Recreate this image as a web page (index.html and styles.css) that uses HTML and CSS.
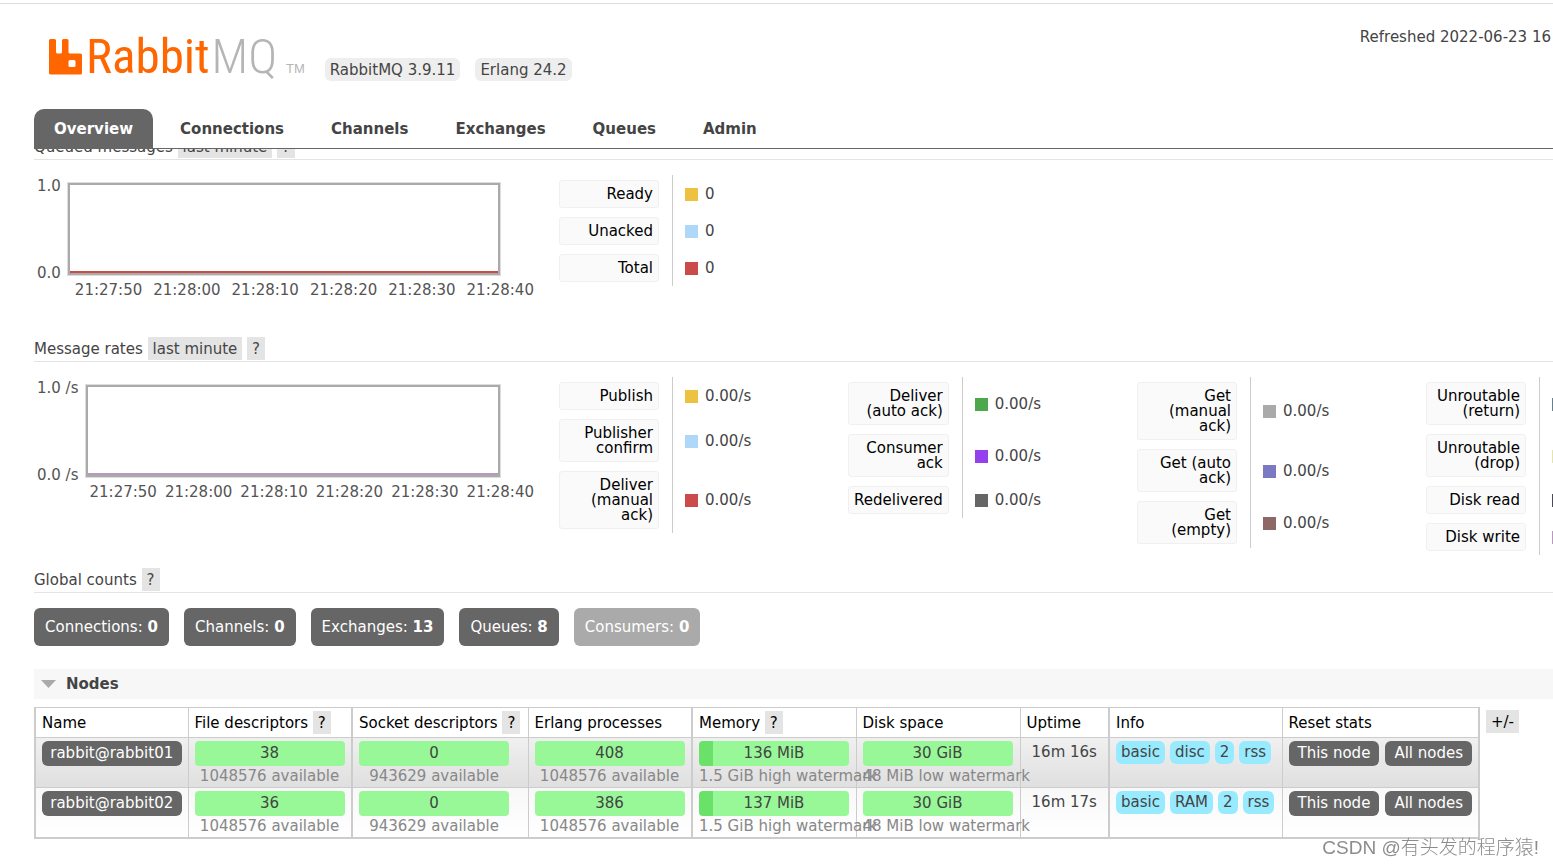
FILE: index.html
```html
<!DOCTYPE html>
<html lang="en">
<head>
<meta charset="utf-8">
<title>RabbitMQ Management</title>
<link rel="stylesheet" href="styles.css">
</head>
<body>
<header class="header">
  <div class="brand-row">
    <a class="logo" href="#">
      <svg class="logo-mark" viewBox="0 0 33 36" aria-hidden="true"><path fill="#f60" fill-rule="evenodd" d="M1.500 0H5.500Q7 0 7 1.500V13Q7 14.500 8.500 14.500H11.500Q13 14.500 13 13V1.500Q13 0 14.500 0H18Q19.500 0 19.500 1.500V13Q19.500 14.500 21 14.500H31.500Q33 14.500 33 16V34Q33 35.500 31.500 35.500H1.500Q0 35.500 0 34V1.500Q0 0 1.500 0ZM21 21Q19.500 21 19.500 22.500V26.500Q19.500 28 21 28H25Q26.500 28 26.500 26.500V22.500Q26.500 21 25 21Z"/></svg>
      <span class="logo-text">Rabbit<span class="logo-mq">MQ</span></span><span class="logo-tm">TM</span>
    </a>
    <span class="version">RabbitMQ 3.9.11</span>
    <span class="version">Erlang 24.2</span>
    <span class="refreshed">Refreshed 2022-06-23 16</span>
  </div>
  <nav class="tabs">
    <a class="tab selected" href="#">Overview</a>
    <a class="tab" href="#">Connections</a>
    <a class="tab" href="#">Channels</a>
    <a class="tab" href="#">Exchanges</a>
    <a class="tab" href="#">Queues</a>
    <a class="tab" href="#">Admin</a>
  </nav>
</header>

<main class="main">
  <section class="stats stats-queued">
    <h3 class="heading">Queued messages <button class="chip">last minute</button> <button class="chip">?</button></h3>
    <div class="stats-body">
      <div class="chart">
        <div class="y-axis"><span>1.0</span><span>0.0</span></div>
        <div class="plot plot-total"></div>
        <div class="x-axis"><span>21:27:50</span><span>21:28:00</span><span>21:28:10</span><span>21:28:20</span><span>21:28:30</span><span>21:28:40</span></div>
      </div>
      <table class="legend">
        <tr><th><span class="label">Ready</span></th><td><i class="swatch yellow"></i>0</td></tr>
        <tr><th><span class="label">Unacked</span></th><td><i class="swatch sky"></i>0</td></tr>
        <tr><th><span class="label">Total</span></th><td><i class="swatch red"></i>0</td></tr>
      </table>
    </div>
  </section>

  <section class="stats stats-rates">
    <h3 class="heading">Message rates <button class="chip">last minute</button> <button class="chip">?</button></h3>
    <div class="stats-body">
      <div class="chart">
        <div class="y-axis"><span>1.0 /s</span><span>0.0 /s</span></div>
        <div class="plot plot-disk"></div>
        <div class="x-axis"><span>21:27:50</span><span>21:28:00</span><span>21:28:10</span><span>21:28:20</span><span>21:28:30</span><span>21:28:40</span></div>
      </div>
      <table class="legend">
        <tr><th><span class="label">Publish</span></th><td><i class="swatch yellow"></i>0.00/s</td></tr>
        <tr><th><span class="label">Publisher<br>confirm</span></th><td><i class="swatch sky"></i>0.00/s</td></tr>
        <tr><th><span class="label">Deliver<br>(manual<br>ack)</span></th><td><i class="swatch red"></i>0.00/s</td></tr>
      </table>
      <table class="legend">
        <tr><th><span class="label">Deliver<br>(auto ack)</span></th><td><i class="swatch green"></i>0.00/s</td></tr>
        <tr><th><span class="label">Consumer<br>ack</span></th><td><i class="swatch purple"></i>0.00/s</td></tr>
        <tr><th><span class="label">Redelivered</span></th><td><i class="swatch dark"></i>0.00/s</td></tr>
      </table>
      <table class="legend">
        <tr><th><span class="label">Get<br>(manual<br>ack)</span></th><td><i class="swatch gray"></i>0.00/s</td></tr>
        <tr><th><span class="label">Get (auto<br>ack)</span></th><td><i class="swatch indigo"></i>0.00/s</td></tr>
        <tr><th><span class="label">Get<br>(empty)</span></th><td><i class="swatch brown"></i>0.00/s</td></tr>
      </table>
      <table class="legend">
        <tr><th><span class="label">Unroutable<br>(return)</span></th><td><i class="swatch teal"></i></td></tr>
        <tr><th><span class="label">Unroutable<br>(drop)</span></th><td><i class="swatch cream"></i></td></tr>
        <tr><th><span class="label">Disk read</span></th><td><i class="swatch ink"></i></td></tr>
        <tr><th><span class="label">Disk write</span></th><td><i class="swatch mauve"></i></td></tr>
      </table>
    </div>
  </section>

  <section class="counts">
    <h3 class="heading">Global counts <button class="chip">?</button></h3>
    <div class="count-list">
      <a class="count" href="#">Connections: <b>0</b></a>
      <a class="count" href="#">Channels: <b>0</b></a>
      <a class="count" href="#">Exchanges: <b>13</b></a>
      <a class="count" href="#">Queues: <b>8</b></a>
      <span class="count disabled">Consumers: <b>0</b></span>
    </div>
  </section>

  <section class="nodes">
    <h2 class="nodes-title"><svg class="arrow" viewBox="0 0 15 8" aria-hidden="true"><path fill="#aaa" d="M0 0H15L7.500 8Z"/></svg>Nodes</h2>
    <div class="nodes-body">
      <table class="node-table">
        <colgroup>
          <col class="c-name"><col class="c-file"><col class="c-socket"><col class="c-bar"><col class="c-bar"><col class="c-bar"><col class="c-uptime"><col class="c-info"><col class="c-reset">
        </colgroup>
        <thead>
          <tr><th>Name</th><th>File descriptors <button class="chip">?</button></th><th class="group">Socket descriptors <button class="chip">?</button></th><th>Erlang processes</th><th class="group">Memory <button class="chip">?</button></th><th>Disk space</th><th>Uptime</th><th class="group">Info</th><th>Reset stats</th></tr>
        </thead>
        <tbody>
          <tr class="odd">
            <td><a class="btn wide" href="#">rabbit@rabbit01</a></td>
            <td><div class="meter"><div class="bar">38</div><small>1048576 available</small></div></td>
            <td class="group"><div class="meter"><div class="bar">0</div><small>943629 available</small></div></td>
            <td><div class="meter"><div class="bar">408</div><small>1048576 available</small></div></td>
            <td class="group"><div class="meter"><div class="bar used">136 MiB</div><small>1.5 GiB high watermark</small></div></td>
            <td><div class="meter"><div class="bar">30 GiB</div><small>48 MiB low watermark</small></div></td>
            <td class="uptime">16m 16s</td>
            <td class="group"><div class="items"><abbr>basic</abbr><abbr>disc</abbr><abbr>2</abbr><abbr>rss</abbr></div></td>
            <td><div class="items actions"><button class="btn">This node</button><button class="btn">All nodes</button></div></td>
          </tr>
          <tr class="even">
            <td><a class="btn wide" href="#">rabbit@rabbit02</a></td>
            <td><div class="meter"><div class="bar">36</div><small>1048576 available</small></div></td>
            <td class="group"><div class="meter"><div class="bar">0</div><small>943629 available</small></div></td>
            <td><div class="meter"><div class="bar">386</div><small>1048576 available</small></div></td>
            <td class="group"><div class="meter"><div class="bar used">137 MiB</div><small>1.5 GiB high watermark</small></div></td>
            <td><div class="meter"><div class="bar">30 GiB</div><small>48 MiB low watermark</small></div></td>
            <td class="uptime">16m 17s</td>
            <td class="group"><div class="items"><abbr>basic</abbr><abbr>RAM</abbr><abbr>2</abbr><abbr>rss</abbr></div></td>
            <td><div class="items actions"><button class="btn">This node</button><button class="btn">All nodes</button></div></td>
          </tr>
        </tbody>
      </table>
      <button class="chip columns">+/-</button>
    </div>
  </section>
</main>
<div class="watermark">CSDN @有头发的程序猿!</div>
</body>
</html>
```
FILE: styles.css
```css
* { box-sizing: border-box; }
html { overflow: hidden; }
body {
  margin: 0;
  background: #fff;
  color: #444;
  font: 15px/23px Verdana, "DejaVu Sans", sans-serif;
}
a { color: inherit; text-decoration: none; }
button { font: inherit; border: 0; margin: 0; white-space: nowrap; }

/* Header */
.header {
  position: fixed;
  top: 0;
  left: 0;
  right: 0;
  z-index: 2;
  margin-top: 3px;
  padding-left: 34px;
  border-top: 1px solid #ddd;
  background: #fff;
}
.brand-row {
  display: flex;
  align-items: flex-end;
  height: 105px;
  padding: 0 2px 32px 15px;
}
.logo { display: flex; align-items: flex-end; margin-right: 20px; padding-bottom: 2px; }
.logo-mark { width: 33px; height: 36px; margin-right: 4px; }
.logo-text {
  width: 196px;
  color: #f60;
  font: 49px/36px "Roboto Condensed", "Liberation Sans Narrow", sans-serif;
  white-space: nowrap;
}
.logo-mq { margin-left: 2px; color: #b5b5b5; font-weight: 300; }
.logo-tm { margin-left: 4px; color: #b5b5b5; font: 13px/12px "Liberation Sans", sans-serif; }
.version {
  margin: 0 15px -4px 0;
  padding: 1px 5px 0;
  border-radius: 6px;
  background: #eee;
  line-height: 22px;
  white-space: nowrap;
}
.refreshed { align-self: flex-start; margin-left: auto; padding-top: 22px; white-space: nowrap; }
.tabs { display: flex; gap: 7px; border-bottom: 1px solid #666; }
.tab {
  padding: 9px 20px 7px;
  border-radius: 10px 10px 0 0;
  font-weight: bold;
}
.tab.selected { background: #666; color: #fff; }

/* Sections */
.main { padding: 135px 0 0 34px; overflow: hidden; }
.heading {
  margin: 0;
  border-bottom: 1px solid #e4e4e4;
  font-size: 15px;
  font-weight: normal;
  white-space: nowrap;
}
.chip { padding: 1px 5px 0; background: #e4e4e4; color: #444; line-height: 22px; }
.stats-body { display: flex; padding-top: 15px; overflow: hidden; }
.stats-queued .stats-body { height: 177px; }
.stats-rates .stats-body { height: 206px; }
.chart {
  display: grid;
  grid-template-columns: auto 1fr;
  grid-template-rows: 94px 26px;
  flex: none;
  width: 500px;
  margin-right: 25px;
  padding: 7px 0 0 3px;
  color: #545454;
}
.y-axis {
  display: flex;
  flex-direction: column;
  justify-content: space-between;
  margin: -7px 0 -9px;
  padding-right: 6px;
  white-space: nowrap;
}
.plot {
  display: flex;
  align-items: flex-end;
  margin-right: 33px;
  border: 3px solid #aaa;
  outline: 1px solid #ddd;
  outline-offset: -1px;
}
.plot::after { content: ""; flex: 1; height: 2px; }
.plot-total::after { background: #cb4b4b; }
.plot-disk::after { background: #b999bd; }
.x-axis {
  grid-column: 2;
  display: flex;
  justify-content: space-between;
  padding: 3px 0 0 8px;
}
.stats-rates .x-axis { padding-left: 5px; }
.legend {
  flex: none;
  width: 289px;
  height: 1px;
  border-spacing: 0;
  line-height: 15px;
}
.legend th { width: 113px; padding: 5px 13px 4px 0; font-weight: normal; }
.label {
  display: block;
  padding: 6px 5px 5px;
  border: 1px solid #f0f0f0;
  border-radius: 3px;
  background: #fafafa;
  color: #000;
  text-align: right;
  white-space: nowrap;
}
.legend td { padding: 2px 0 0 12px; border-left: 1px solid #ccc; }
.swatch {
  display: inline-block;
  width: 13px;
  height: 13px;
  margin-right: 7px;
  vertical-align: -2px;
}
.yellow { background: #edc240; }
.sky { background: #afd8f8; }
.red { background: #cb4b4b; }
.green { background: #4da74d; }
.purple { background: #9440ed; }
.dark { background: #666; }
.gray { background: #aaa; }
.indigo { background: #7c79c3; }
.brown { background: #8e6767; }
.teal { background: #67808e; }
.cream { background: #e5e4ae; }
.ink { background: #4b4a55; }
.mauve { background: #b999bd; }

/* Global counts */
.count-list { display: flex; gap: 15px; padding: 15px 0 23px; }
.count { padding: 8px 11px 7px; border-radius: 6px; background: #666; color: #fff; white-space: nowrap; }
.count.disabled { background: #aaa; }

/* Nodes */
.nodes-title {
  display: flex;
  align-items: center;
  gap: 10px;
  height: 30px;
  margin: 0 0 8px;
  padding-left: 7px;
  background: #f7f7f7;
  font-size: 15px;
}
.arrow { width: 15px; height: 8px; }
.nodes-body { display: flex; align-items: flex-start; gap: 6px; }
.node-table {
  flex: none;
  width: 1444px;
  table-layout: fixed;
  border-collapse: collapse;
  border: 2px solid #ccc;
  border-top-width: 1px;
}
.c-name { width: 153px; }
.c-file { width: 164px; }
.c-socket { width: 176px; }
.c-bar { width: 164px; }
.c-uptime { width: 89px; }
.c-info { width: 173px; }
.c-reset { width: 197px; }
.node-table th {
  padding: 3px 0 3px 6px;
  border: 1px solid #ccc;
  color: #000;
  font-weight: normal;
  line-height: 22px;
  text-align: left;
  white-space: nowrap;
}
.node-table th .chip { color: #000; }
.node-table td { padding: 3px 6px 0; border: 1px solid #ccc; vertical-align: top; }
.node-table .group { border-left-width: 2px; }
.odd { background: linear-gradient(#f0f0f0, #dfdfdf); }
.even { background: linear-gradient(#f8f8f8, #fff); }
.btn {
  padding: 0 8px;
  border-radius: 6px;
  background: #666;
  color: #fff;
  line-height: 25px;
  white-space: nowrap;
}
.wide { display: block; padding: 0; text-align: center; }
.meter { width: 150px; text-align: center; white-space: nowrap; }
.bar { border-radius: 4px; background: #98f898; line-height: 25px; }
.bar.used { background: linear-gradient(90deg, #6ae26a 14px, #98f898 14px); }
.meter small { display: block; color: #888; font-size: 15px; line-height: 21px; }
.uptime { text-align: center; white-space: nowrap; }
.items { display: flex; align-items: flex-start; gap: 5px; }
.items abbr { padding: 0 5px; border-radius: 6px; background: #98ebff; }
.actions { gap: 6px; }
.actions .btn { flex: auto; }
.columns { margin-top: 3px; color: #000; }

.watermark {
  position: fixed;
  right: 14px;
  bottom: 5px;
  color: #8c8c8c;
  font: 300 19px/28px "Liberation Sans", "Noto Sans CJK SC", sans-serif;
}
```
